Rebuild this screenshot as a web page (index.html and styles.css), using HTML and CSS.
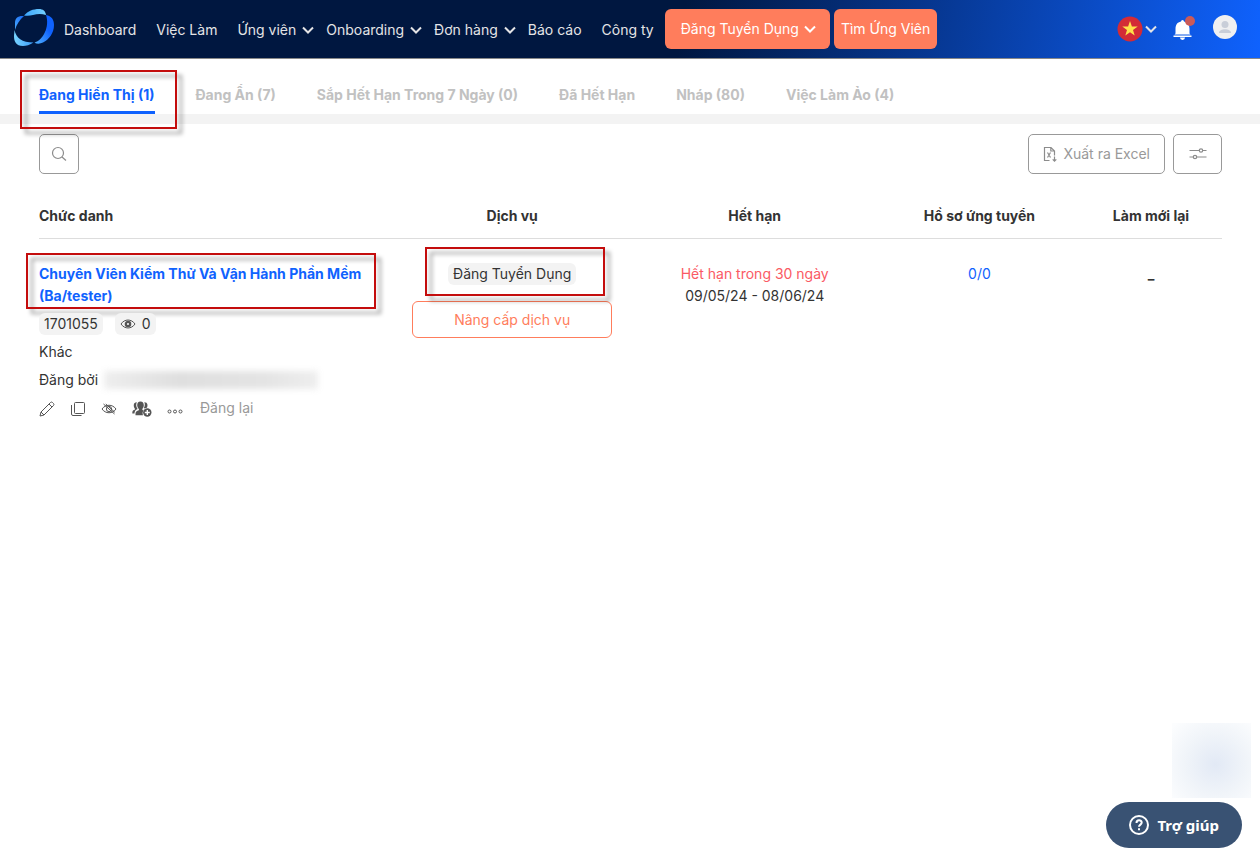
FILE: index.html
```html
<!DOCTYPE html>
<html lang="vi">
<head>
<meta charset="utf-8">
<meta name="viewport" content="width=device-width, initial-scale=1">
<title>Việc Làm</title>
<link rel="stylesheet" href="styles.css">
</head>
<body>
<header class="topbar">
  <a class="logo" href="#" aria-label="Trang chủ">
    <svg width="42" height="40" viewBox="0 0 42 40">
      <defs>
        <linearGradient id="lg1" x1="0" y1="0" x2="1" y2="0"><stop offset="0" stop-color="#3aa4fb"/><stop offset="1" stop-color="#74d0ff"/></linearGradient>
        <linearGradient id="lg2" x1="1" y1="0" x2="0" y2="1"><stop offset=".4" stop-color="#0f62fe"/><stop offset="1" stop-color="#54b4fd"/></linearGradient>
        <linearGradient id="lg3" x1="0" y1="0" x2="1" y2="0"><stop offset="0" stop-color="#78d4ff"/><stop offset="1" stop-color="#3a9cfb"/></linearGradient>
        <linearGradient id="lg4" x1="1" y1="0" x2="0" y2="1"><stop offset="0" stop-color="#1668f8"/><stop offset="1" stop-color="#4cabfc"/></linearGradient>
      </defs>
      <path fill="url(#lg1)" d="M11 8.500C15 4 20 2 26 2c4 0 6.500 2 7 6-5-1.500-9-1-13 0-3 .8-6 .8-9 .5z"/>
      <path fill="url(#lg2)" d="M33 8c5.500 1 8 4.500 8 10 0 8-5 14.500-11 17.500-3 1.500-6 1.500-8.500.2C30 33 37 20 33 8z"/>
      <path fill="url(#lg4)" d="M11 9C5 8.500 2 11 2 16v7c1.500-5.500 4.500-10 9-14z"/>
      <path fill="url(#lg3)" d="M1.500 23C3 31 9 35.500 20.500 35.500 17 38 13 39 10 39 3 39 1 34.500 1 29z"/>
    </svg>
  </a>
  <nav class="nav">
    <a href="#">Dashboard</a>
    <a href="#">Việc Làm</a>
    <a class="has-menu" href="#">Ứng viên <svg class="chev" viewBox="0 0 12 8"><path d="M1 1.500l5 5 5-5"/></svg></a>
    <a class="has-menu" href="#">Onboarding <svg class="chev" viewBox="0 0 12 8"><path d="M1 1.500l5 5 5-5"/></svg></a>
    <a class="has-menu" href="#">Đơn hàng <svg class="chev" viewBox="0 0 12 8"><path d="M1 1.500l5 5 5-5"/></svg></a>
    <a href="#">Báo cáo</a>
    <a href="#">Công ty</a>
  </nav>
  <div class="cta">
    <button class="btn-main wide" type="button">Đăng Tuyển Dụng <svg class="chev" viewBox="0 0 12 8"><path d="M1 1.500l5 5 5-5"/></svg></button>
    <button class="btn-main" type="button">Tìm Ứng Viên</button>
  </div>
  <div class="tools">
    <button class="icon-btn lang" type="button" aria-label="Ngôn ngữ">
      <svg width="26" height="26" viewBox="0 0 26 26"><circle cx="13" cy="13" r="12.500" fill="#d32b36"/><path fill="#ffe14a" d="M13 5l1.900 5.500h5.800l-4.700 3.500 1.700 5.600L13 16.200l-4.700 3.400L10 14l-4.700-3.500h5.800z"/></svg>
      <svg class="chev" viewBox="0 0 12 8"><path d="M1 1.500l5 5 5-5"/></svg>
    </button>
    <button class="icon-btn bell" type="button" aria-label="Thông báo">
      <svg width="24" height="26" viewBox="0 0 24 26"><path fill="#fff" d="M10 5.500a1.500 1.500 0 0 1 3 0c3.800.8 5.500 3.300 5.500 7.500v4.500l1 1h-16l1-1V13c0-4.200 1.700-6.700 5.500-7.500zM2.500 19.500h18V21h-18zM9 21.500h5a2.500 2.500 0 0 1-5 0z"/><circle cx="19" cy="5" r="5" fill="#cb5a58"/></svg>
    </button>
    <button class="icon-btn account" type="button" aria-label="Tài khoản">
      <svg width="24" height="24" viewBox="0 0 24 24"><circle cx="12" cy="12" r="12" fill="#f0f0f1"/><circle cx="12" cy="9.500" r="3.500" fill="#c9ced8"/><path fill="#c9ced8" d="M6 18c0-5 12-5 12 0z"/></svg>
    </button>
  </div>
</header>

<nav class="tabs">
  <a class="tab active" href="#">Đang Hiển Thị (1)<span class="mark mark-tab"></span></a>
  <a class="tab" href="#">Đang Ẩn (7)</a>
  <a class="tab" href="#">Sắp Hết Hạn Trong 7 Ngày (0)</a>
  <a class="tab" href="#">Đã Hết Hạn</a>
  <a class="tab" href="#">Nháp (80)</a>
  <a class="tab" href="#">Việc Làm Ảo (4)</a>
</nav>

<main class="content">
  <div class="toolbar">
    <button class="btn-line search" type="button" aria-label="Tìm kiếm">
      <svg width="16" height="16" viewBox="0 0 16 16" class="stroke"><circle cx="7" cy="7" r="5.500"/><path d="M11 11l4 3.500"/></svg>
    </button>
    <div class="toolbar-right">
      <button class="btn-line excel" type="button">
        <svg width="14" height="16" viewBox="0 0 14 16" class="stroke"><path d="M6.500 14.500H1.500v-13H8l3.500 3.500v4.500M7.800 1.500V5h3.700M4.500 6.500l3 5M7.500 6.500l-3 5M11.500 10.500v4.500M9.700 13.300l1.800 1.800 1.800-1.800"/></svg>
        Xuất ra Excel
      </button>
      <button class="btn-line filter" type="button" aria-label="Bộ lọc">
        <svg width="18" height="14" viewBox="0 0 18 14" class="stroke"><path d="M.500 3.500h9.800M13.700 3.500h3.800M.500 10h3.800M7.700 10h9.800"/><circle cx="12" cy="3.500" r="1.700"/><circle cx="6" cy="10" r="1.700"/></svg>
      </button>
    </div>
  </div>

  <table class="jobs">
    <colgroup><col class="c-title"><col class="c-service"><col class="c-expire"><col class="c-apply"><col class="c-refresh"></colgroup>
    <thead>
      <tr><th>Chức danh</th><th>Dịch vụ</th><th>Hết hạn</th><th>Hồ sơ ứng tuyển</th><th>Làm mới lại</th></tr>
    </thead>
    <tbody>
      <tr>
        <td>
          <div class="job">
            <a class="job-title" href="#">Chuyên Viên Kiểm Thử Và Vận Hành Phần Mềm (Ba/tester)<span class="mark mark-title"></span></a>
            <div class="pills">
              <span class="pill">1701055</span>
              <span class="pill"><svg width="16" height="12" viewBox="0 0 16 12" class="dark"><path d="M1 6c3.500-5.300 10.500-5.300 14 0-3.500 5.300-10.500 5.300-14 0z"/><circle cx="8" cy="6" r="2.200" stroke-width="2.200"/></svg>0</span>
            </div>
            <span>Khác</span>
            <div class="poster">Đăng bởi <span class="masked"></span></div>
            <div class="actions">
              <button class="icon-btn" type="button" aria-label="Sửa"><svg width="16" height="16" viewBox="0 0 16 16" class="dark"><path d="M1 15l1-4L11.500 1.500q1-.9 2 0l1 1q.9 1 0 2L5 14zM10 3l3 3M2 11l3 3"/></svg></button>
              <button class="icon-btn" type="button" aria-label="Sao chép"><svg width="16" height="16" viewBox="0 0 16 16" class="dark"><rect x="4.500" y="1.500" width="10" height="11" rx="1"/><path d="M1.500 4v9q0 1.500 1.500 1.500h8.500"/></svg></button>
              <button class="icon-btn" type="button" aria-label="Ẩn"><svg width="16" height="16" viewBox="0 0 16 16" class="dark"><path d="M1 8c3.500-5 10.500-5 14 0-3.500 5-10.500 5-14 0zM2.500 3l11 10M4.800 3l9 8.300"/><circle cx="8" cy="8" r="2.600"/></svg></button>
              <button class="icon-btn" type="button" aria-label="Thêm người"><svg width="20" height="16" viewBox="0 0 20 16"><path fill="#555" d="M8.500.500c2.300 0 3.300 1.600 3.300 3.700 0 1.700-.8 3-1.400 3.500-.3 1 .1 1.400 1.100 1.800-.9 1-1.200 2.900-.5 4.800H3.500c0-3.200.4-3.800 2.700-4.700 1-.3.900-1.200.5-1.900C6 7 5.200 5.800 5.200 4.200c0-2.200 1-3.700 3.300-3.700zM4.800 1.300C3.800 3.500 4 6 5.600 8c-2.200 1-3 2-3.100 4.500H.300c0-2.300.3-3 2.200-3.800.8-.4.500-.9.200-1.300-1.600-2.300-1.300-6.300 2.100-6.100zM12.300 1.300c3.400-.2 3.800 3.400 2.600 5.500-1 0-1.700.3-2.500.8-.5-.2-.6-.5-.3-1 .9-1.700 1-3.700.2-5.300z"/><circle cx="15.300" cy="11.500" r="4.200" fill="#555"/><path d="M15.300 9v5M12.800 11.500h5" stroke="#fff" stroke-width="1.400"/></svg></button>
              <button class="icon-btn" type="button" aria-label="Thêm"><svg width="16" height="16" viewBox="0 0 16 16" class="dark"><circle cx="2.500" cy="10.500" r="1.500"/><circle cx="8" cy="10.500" r="1.500"/><circle cx="13.500" cy="10.500" r="1.500"/></svg></button>
              <a class="repost" href="#">Đăng lại</a>
            </div>
          </div>
        </td>
        <td>
          <div class="service">
            <span class="pill">Đăng Tuyển Dụng<span class="mark mark-service"></span></span>
            <button class="btn-upgrade" type="button">Nâng cấp dịch vụ</button>
          </div>
        </td>
        <td><div class="danger">Hết hạn trong 30 ngày</div><div>09/05/24 - 08/06/24</div></td>
        <td><a class="count" href="#">0/0</a></td>
        <td><b>_</b></td>
      </tr>
    </tbody>
  </table>
</main>

<div class="floating">
  <div class="glow"></div>
  <button class="help" type="button">
    <svg width="20" height="20" viewBox="0 0 20 20" fill="none" stroke="#fff" stroke-width="2"><circle cx="10" cy="10" r="9"/><path d="M7.500 8c0-3.600 5.200-3.400 5.200-.4 0 2-2.700 2-2.700 4.200"/><path d="M10 13.200v2"/></svg>
    Trợ giúp
  </button>
</div>
</body>
</html>
```

FILE: styles.css
```css
* { box-sizing: border-box; }
body {
  margin: 0;
  background: #fff;
  color: #333;
  font: 14px/22px Inter, "Noto Sans", sans-serif;
}
a { color: inherit; text-decoration: none; }
button { font: inherit; color: inherit; cursor: pointer; }
svg { display: block; flex: none; }

.topbar {
  display: flex;
  align-items: center;
  height: 59px;
  padding: 0 23px 0 13px;
  border-bottom: 1px solid #888;
  background: linear-gradient(100deg, #001740 0%, #001740 54%, #0f62fe 100%);
  color: #e4e4e6;
}
.logo { margin: 0 9px 4px 0; }
.nav { display: flex; align-items: center; gap: 20px; padding-top: 2px; white-space: nowrap; }
.has-menu { display: flex; align-items: center; gap: 6px; margin-right: -8px; }
.chev {
  width: 12px;
  height: 8px;
  fill: none;
  stroke: currentColor;
  stroke-width: 2;
}
.cta { display: flex; gap: 4px; margin-left: 11px; }
.btn-main {
  display: flex;
  align-items: center;
  gap: 5px;
  height: 40px;
  padding: 0 7px;
  border: 0;
  border-radius: 6px;
  background: #ff7d5c;
  color: #fff;
  white-space: nowrap;
}
.btn-main.wide { padding: 0 14px 0 16px; }
.tools { display: flex; align-items: center; gap: 14px; margin-left: auto; }
.icon-btn { padding: 0; border: 0; background: none; }
.lang { display: flex; align-items: center; gap: 2px; }
.bell { margin-right: 4px; }
.account { margin-bottom: 4px; }

.tabs {
  display: flex;
  gap: 41px;
  padding: 25px 39px 0;
  border-bottom: 10px solid #f3f3f3;
}
.tab {
  position: relative;
  padding-bottom: 5px;
  border-bottom: 3px solid transparent;
  color: #c1c1c1;
  font-weight: 700;
  white-space: nowrap;
}
.tab.active { border-color: #0f62fe; color: #0f62fe; }

.mark {
  position: absolute;
  border: 2px solid #c40d0d;
  filter: drop-shadow(5px 5px 2px rgba(0, 0, 0, .4));
  pointer-events: none;
}
.mark-tab { inset: -14px -22px -18px -19px; }
.mark-title { inset: -10px -13px -2px -13px; }
.mark-service { inset: -16px -29px -11px -23px; }

.content { padding: 10px 38px 0 39px; }
.toolbar, .toolbar-right { display: flex; justify-content: space-between; gap: 8px; }
.btn-line {
  display: flex;
  align-items: center;
  justify-content: center;
  gap: 6px;
  height: 40px;
  padding: 0 14px;
  border: 1px solid #999;
  border-radius: 5px;
  background: #fff;
  color: #999;
}
.search { width: 40px; padding: 0; }
.filter { width: 49px; }
.stroke { fill: none; stroke: #8c8c8c; stroke-width: 1.2; }
.dark { fill: none; stroke: #555; stroke-width: 1; }

.jobs {
  width: 100%;
  margin-top: 20px;
  border-collapse: collapse;
  table-layout: fixed;
}
.c-title { width: 30%; }
.c-service { width: 20%; }
.c-expire { width: 21%; }
.c-apply { width: 17%; }
.c-refresh { width: 12%; }
.jobs th {
  padding: 11px 0;
  border-bottom: 1px solid #ddd;
  font-weight: 700;
}
.jobs td { padding: 24px 0 0; text-align: center; vertical-align: top; }
.jobs th:first-child, .jobs td:first-child { text-align: left; }

.job { display: flex; flex-direction: column; align-items: flex-start; gap: 6px; }
.job-title { position: relative; width: 324px; color: #0f62fe; font-weight: 700; }
.pills { display: flex; gap: 12px; }
.pill {
  position: relative;
  display: flex;
  align-items: center;
  gap: 6px;
  padding: 0 5px;
  border-radius: 6px;
  background: #f3f3f3;
}
.poster { display: flex; align-items: center; gap: 6px; }
.masked {
  width: 214px;
  height: 18px;
  background: linear-gradient(90deg, #eee, #dfdfdf 35%, #e4e4e4 75%, #eee);
  filter: blur(3px);
}
.actions { display: flex; align-items: center; gap: 15px; }
.actions .icon-btn { padding-top: 2px; }
.repost { margin-left: 2px; color: #999; }
.service { display: flex; flex-direction: column; align-items: center; gap: 16px; }
.btn-upgrade {
  width: 200px;
  height: 37px;
  border: 1px solid #ff7d5c;
  border-radius: 6px;
  background: #fff;
  color: #ff7d5c;
}
.danger { color: #fa5a64; }
.count { color: #0f62fe; }

.floating {
  position: fixed;
  right: 9px;
  bottom: 7px;
  display: flex;
  flex-direction: column;
  align-items: flex-end;
  gap: 4px;
}
.glow {
  width: 79px;
  height: 75px;
  background: radial-gradient(circle at 55% 55%, #e2e9f5, #f0f4f9 50%, #fcfdfe 95%);
}
.help {
  display: flex;
  align-items: center;
  gap: 8px;
  height: 46px;
  margin-right: 9px;
  padding: 0 23px;
  border: 0;
  border-radius: 23px;
  background: #395273;
  color: #fff;
  font: 700 15px/22px "Noto Sans", sans-serif;
}
```
